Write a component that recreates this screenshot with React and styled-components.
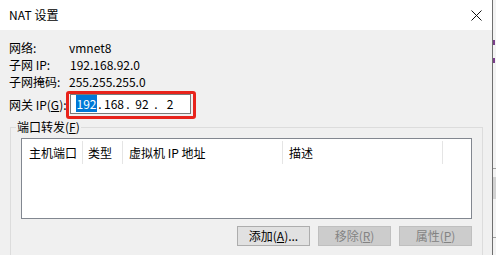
import React from "react";
import styled, { createGlobalStyle } from "styled-components";

const GlobalStyle = createGlobalStyle`
  html, body {
    margin: 0;
    padding: 0;
    background: #f0f0f0;
  }
  body {
    font-family: "Noto Sans CJK SC", "Noto Sans", sans-serif;
    font-size: 12px;
    color: #000;
  }
`;

const Screen = styled.div`
  width: 496px;
  height: 255px;
  display: flex;
  overflow: hidden;
`;

const Dialog = styled.div`
  width: 492px;
  flex: none;
  display: flex;
  flex-direction: column;
  background: #f0f0f0;
  border-right: 1px solid #6f6f6f;
`;

const TitleBar = styled.div`
  height: 30px;
  flex: none;
  display: flex;
  align-items: center;
  justify-content: space-between;
  padding: 0 10px 0 9px;
  background: #fff;
  line-height: 30px;
`;

const Title = styled.span`
  font-size: 12px;
  letter-spacing: 0.1px;
`;

const CloseIcon = () => (
  <svg width="11" height="11" viewBox="0 0 11 11">
    <path d="M0.5 0.5 L10.5 10.5 M10.5 0.5 L0.5 10.5" stroke="#111" strokeWidth="1" />
  </svg>
);

const Body = styled.div`
  flex: 1;
  display: flex;
  flex-direction: column;
  padding: 9px 9px 0 9px;
`;

const InfoGrid = styled.div`
  display: grid;
  grid-template-columns: 60px auto;
  line-height: 17px;
`;

const Label = styled.span`
  white-space: nowrap;
`;

const Value = styled.span`
  padding-left: ${({ $shift }) => $shift || 0}px;
`;

const GatewayRow = styled.div`
  display: flex;
  align-items: center;
  margin-top: 1px;
  height: 27px;
`;

const GatewayLabel = styled.span`
  width: 57px;
  white-space: nowrap;
`;

const Highlight = styled.div`
  border: 3px solid #e8231b;
  border-radius: 3px;
  padding: 0 2px 2px 1px;
  display: flex;
`;

const IpBox = styled.div`
  width: 119px;
  height: 18px;
  border: 1px solid #7a7a7a;
  background: #fff;
  display: flex;
  align-items: center;
  padding-left: 5px;
  box-sizing: content-box;
  width: 114px;
`;

const IpField = styled.span`
  width: 20px;
  text-align: center;
  line-height: 14px;
`;

const Selected = styled.span`
  background: #0078d7;
  color: #fff;
  padding: 0 0.5px;
`;

const IpDot = styled.span`
  width: 8px;
  text-align: center;
  line-height: 14px;
`;

const Group = styled.fieldset`
  margin: 1px 0 0 1px;
  padding: 0 10px 0 10px;
  border: 1px solid #dcdcdc;
  border-bottom: none;
  flex: 1;
  min-width: 0;
  display: flex;
  flex-direction: column;
`;

const Legend = styled.legend`
  margin-left: -5px;
  padding: 0 1px;
  line-height: 16px;
`;

const ListView = styled.div`
  margin-top: 3px;
  height: 79px;
  border: 1px solid #828790;
  background: #fff;
  display: flex;
  align-items: flex-start;
`;

const HeaderCell = styled.div`
  width: ${({ $w }) => $w}px;
  height: 23px;
  margin-top: 2px;
  box-sizing: border-box;
  border-right: 1px solid #e5e5e5;
  padding-left: ${({ $pad }) => $pad || 6}px;
  line-height: 23px;
  white-space: nowrap;
`;

const Buttons = styled.div`
  display: flex;
  justify-content: flex-end;
  gap: 8px;
  margin-top: 7px;
`;

const Button = styled.button`
  width: 73px;
  height: 20px;
  padding: 0;
  font-family: inherit;
  font-size: 12px;
  line-height: 18px;
  border: 1px solid ${({ disabled }) => (disabled ? "#bfbfbf" : "#adadad")};
  background: ${({ disabled }) => (disabled ? "#cccccc" : "#e1e1e1")};
  color: ${({ disabled }) => (disabled ? "#838383" : "#000")};
`;

const SideStrip = styled.div`
  flex: 1;
  display: flex;
  flex-direction: column;
  background: #f3f3f3;
`;

const SideMark = styled.div`
  height: 5px;
  margin-top: ${({ $top }) => $top}px;
  border-left: 2px solid #7a3f8a;
  width: 1px;
`;

const SideLine = styled.div`
  margin-top: ${({ $top }) => $top}px;
  height: ${({ $h }) => $h || 1}px;
  background: ${({ $c }) => $c || "#a0a0a0"};
`;

export default function App() {
  return (
    <>
      <GlobalStyle />
      <Screen>
        <Dialog>
          <TitleBar>
            <Title>NAT 设置</Title>
            <CloseIcon />
          </TitleBar>
          <Body>
            <InfoGrid>
              <Label>网络:</Label>
              <Value>vmnet8</Value>
              <Label>子网 IP:</Label>
              <Value $shift={1}>192.168.92.0</Value>
              <Label>子网掩码:</Label>
              <Value>255.255.255.0</Value>
            </InfoGrid>
            <GatewayRow>
              <GatewayLabel>
                网关 IP(<u>G</u>):
              </GatewayLabel>
              <Highlight>
                <IpBox>
                  <IpField>
                    <Selected>192</Selected>
                  </IpField>
                  <IpDot>.</IpDot>
                  <IpField>168</IpField>
                  <IpDot>.</IpDot>
                  <IpField>92</IpField>
                  <IpDot>.</IpDot>
                  <IpField>2</IpField>
                </IpBox>
              </Highlight>
            </GatewayRow>
            <Group>
              <Legend>
                端口转发(<u>F</u>)
              </Legend>
              <ListView>
                <HeaderCell $w={61} $pad={7}>主机端口</HeaderCell>
                <HeaderCell $w={40} $pad={5}>类型</HeaderCell>
                <HeaderCell $w={160}>虚拟机 IP 地址</HeaderCell>
                <HeaderCell $w={160}>描述</HeaderCell>
              </ListView>
              <Buttons>
                <Button>
                  添加(<u>A</u>)...
                </Button>
                <Button disabled>
                  移除(<u>R</u>)
                </Button>
                <Button disabled>
                  属性(<u>P</u>)
                </Button>
              </Buttons>
            </Group>
          </Body>
        </Dialog>
        <SideStrip>
          <SideMark $top={40} />
          <SideMark $top={13} />
          <SideLine $top={105} />
          <SideLine $top={8} $h={22} $c="#d2d2d2" />
          <SideLine $top={38} />
        </SideStrip>
      </Screen>
    </>
  );
}
